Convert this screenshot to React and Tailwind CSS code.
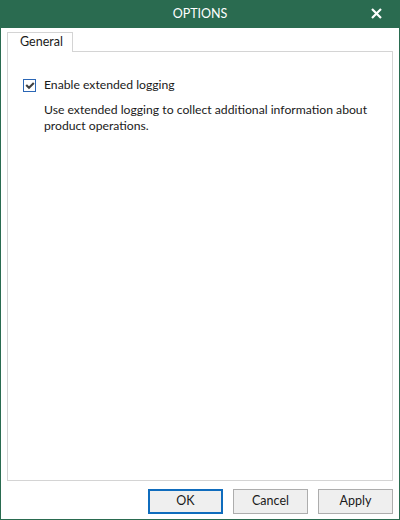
import React, { useState } from 'react';

export default function App() {
  const [checked, setChecked] = useState(true);

  return (
    <div className="w-[400px] h-[520px] flex flex-col bg-white border-x border-b border-[#2a6b50] text-[12px] text-[#1a1a1a]" style={{ fontFamily: 'Lato, "Noto Sans", sans-serif' }}>
      {/* Title bar */}
      <div className="h-[28px] shrink-0 bg-[#2a6b50] relative flex items-center justify-center text-white text-[12.5px]">
        <span>OPTIONS</span>
        <svg className="absolute left-[370px] top-[8px]" width="11" height="11" viewBox="0 0 11 11">
          <path d="M1 1 L10 10 M10 1 L1 10" stroke="white" strokeWidth="2.2" />
        </svg>
      </div>

      <div className="flex-1 flex flex-col px-[6px] pt-[4px]">
        {/* Tabs */}
        <div className="flex h-[19px]">
          <div className="w-[66px] border-x border-t border-[#d4d4d4] bg-white flex items-center pl-[12px] relative -mb-px z-10 h-[20px] text-[12.5px]">
            General
          </div>
        </div>

        {/* Panel */}
        <div className="h-[430px] border border-[#d4d4d4] px-[15px] pt-[25px] text-[12.2px]">
          <label className="flex items-center gap-[8px] cursor-pointer">
            <span
              onClick={() => setChecked(!checked)}
              className="w-[13px] h-[13px] border border-[#2b66b5] bg-white flex items-center justify-center"
            >
              {checked && (
                <svg width="10" height="9" viewBox="0 0 10 9">
                  <path d="M1.2 4 L4 6.8 L8.8 2" stroke="#404040" strokeWidth="2.1" fill="none" />
                </svg>
              )}
            </span>
            <span className="leading-[16px]">Enable extended logging</span>
          </label>
          <p className="pl-[21px] mt-[9px] leading-[16px]">
            Use extended logging to collect additional information about product operations.
          </p>
        </div>

        {/* Buttons */}
        <div className="flex justify-end gap-[10px] mt-[8px] text-[12.5px]">
          <button className="w-[75px] h-[25px] bg-[#efefef] border-2 border-[#0f6cbd]">OK</button>
          <button className="w-[75px] h-[25px] bg-[#efefef] border border-[#adadad]">Cancel</button>
          <button className="w-[75px] h-[25px] bg-[#efefef] border border-[#adadad]">Apply</button>
        </div>
      </div>
    </div>
  );
}
